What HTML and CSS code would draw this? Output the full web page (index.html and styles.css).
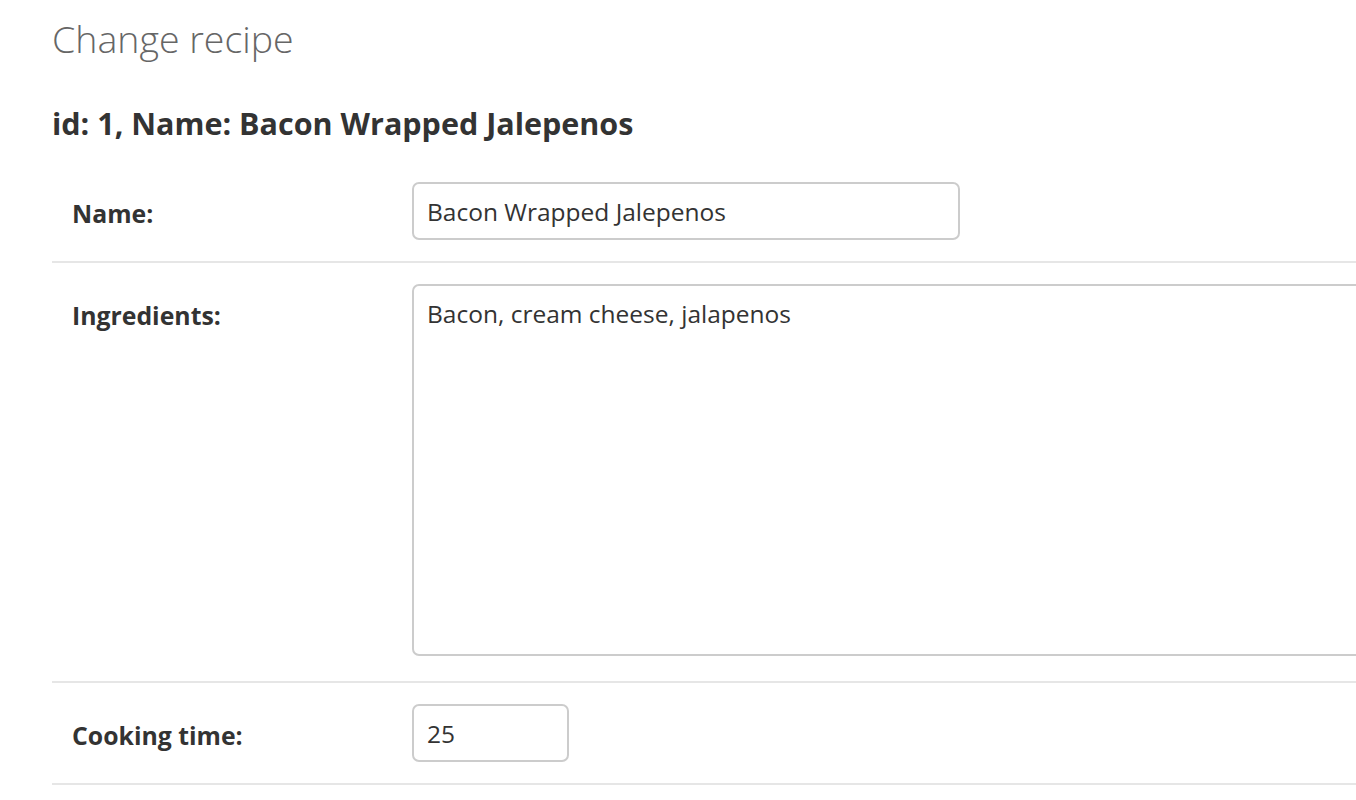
FILE: index.html
```html
<!DOCTYPE html>
<html lang="en">
<head>
<meta charset="utf-8">
<title>Change recipe</title>
<link rel="stylesheet" href="styles.css">
</head>
<body>
<div class="content">
  <h1 class="page-title">Change recipe</h1>
  <h2 class="record-title">id: 1, Name: Bacon Wrapped Jalepenos</h2>
  <form class="change-form">
    <div class="form-row">
      <label class="field-label" for="id_name">Name:</label>
      <input class="text-input name-input" id="id_name" type="text" value="Bacon Wrapped Jalepenos">
    </div>
    <div class="form-row">
      <label class="field-label" for="id_ingredients">Ingredients:</label>
      <textarea class="text-area" id="id_ingredients">Bacon, cream cheese, jalapenos</textarea>
    </div>
    <div class="form-row">
      <label class="field-label" for="id_time">Cooking time:</label>
      <input class="text-input time-input" id="id_time" type="text" value="25">
    </div>
  </form>
</div>
</body>
</html>
```

FILE: styles.css
```css
html, body {
  margin: 0;
  padding: 0;
  background: #fff;
  overflow: hidden;
}

body {
  font-family: "Open Sans", "Noto Sans", "DejaVu Sans", sans-serif;
  color: #333;
}

.content {
  padding: 16px 0 0 52px;
}

.page-title {
  margin: 0 0 42px 0;
  font-size: 37.5px;
  line-height: 45px;
  font-weight: 300;
  color: #666;
}

.record-title {
  margin: 0 0 18px 0;
  font-size: 30.5px;
  line-height: 40px;
  font-weight: 700;
  color: #333;
}

.change-form {
  margin: 0;
}

.form-row {
  display: flex;
  align-items: flex-start;
  padding: 21px 0 21px 20px;
  border-bottom: 2px solid #e6e6e6;
}

.field-label {
  flex: 0 0 340px;
  padding-top: 15px;
  font-size: 24.8px;
  line-height: 32px;
  font-weight: 700;
  color: #333;
}

.text-input {
  box-sizing: border-box;
  height: 58px;
  padding: 0 13px;
  border: 2px solid #ccc;
  border-radius: 7px;
  font-family: inherit;
  font-size: 24.5px;
  color: #333;
  background: #fff;
  outline: none;
}

.name-input {
  width: 548px;
}

.time-input {
  width: 157px;
}

.text-area {
  box-sizing: border-box;
  display: block;
  flex: 0 0 1000px;
  width: 1000px;
  height: 372px;
  margin-bottom: 4px;
  padding: 11px 13px;
  border: 2px solid #ccc;
  border-radius: 7px;
  font-family: inherit;
  font-size: 24.5px;
  line-height: 1.4;
  color: #333;
  background: #fff;
  resize: none;
  outline: none;
}
```
